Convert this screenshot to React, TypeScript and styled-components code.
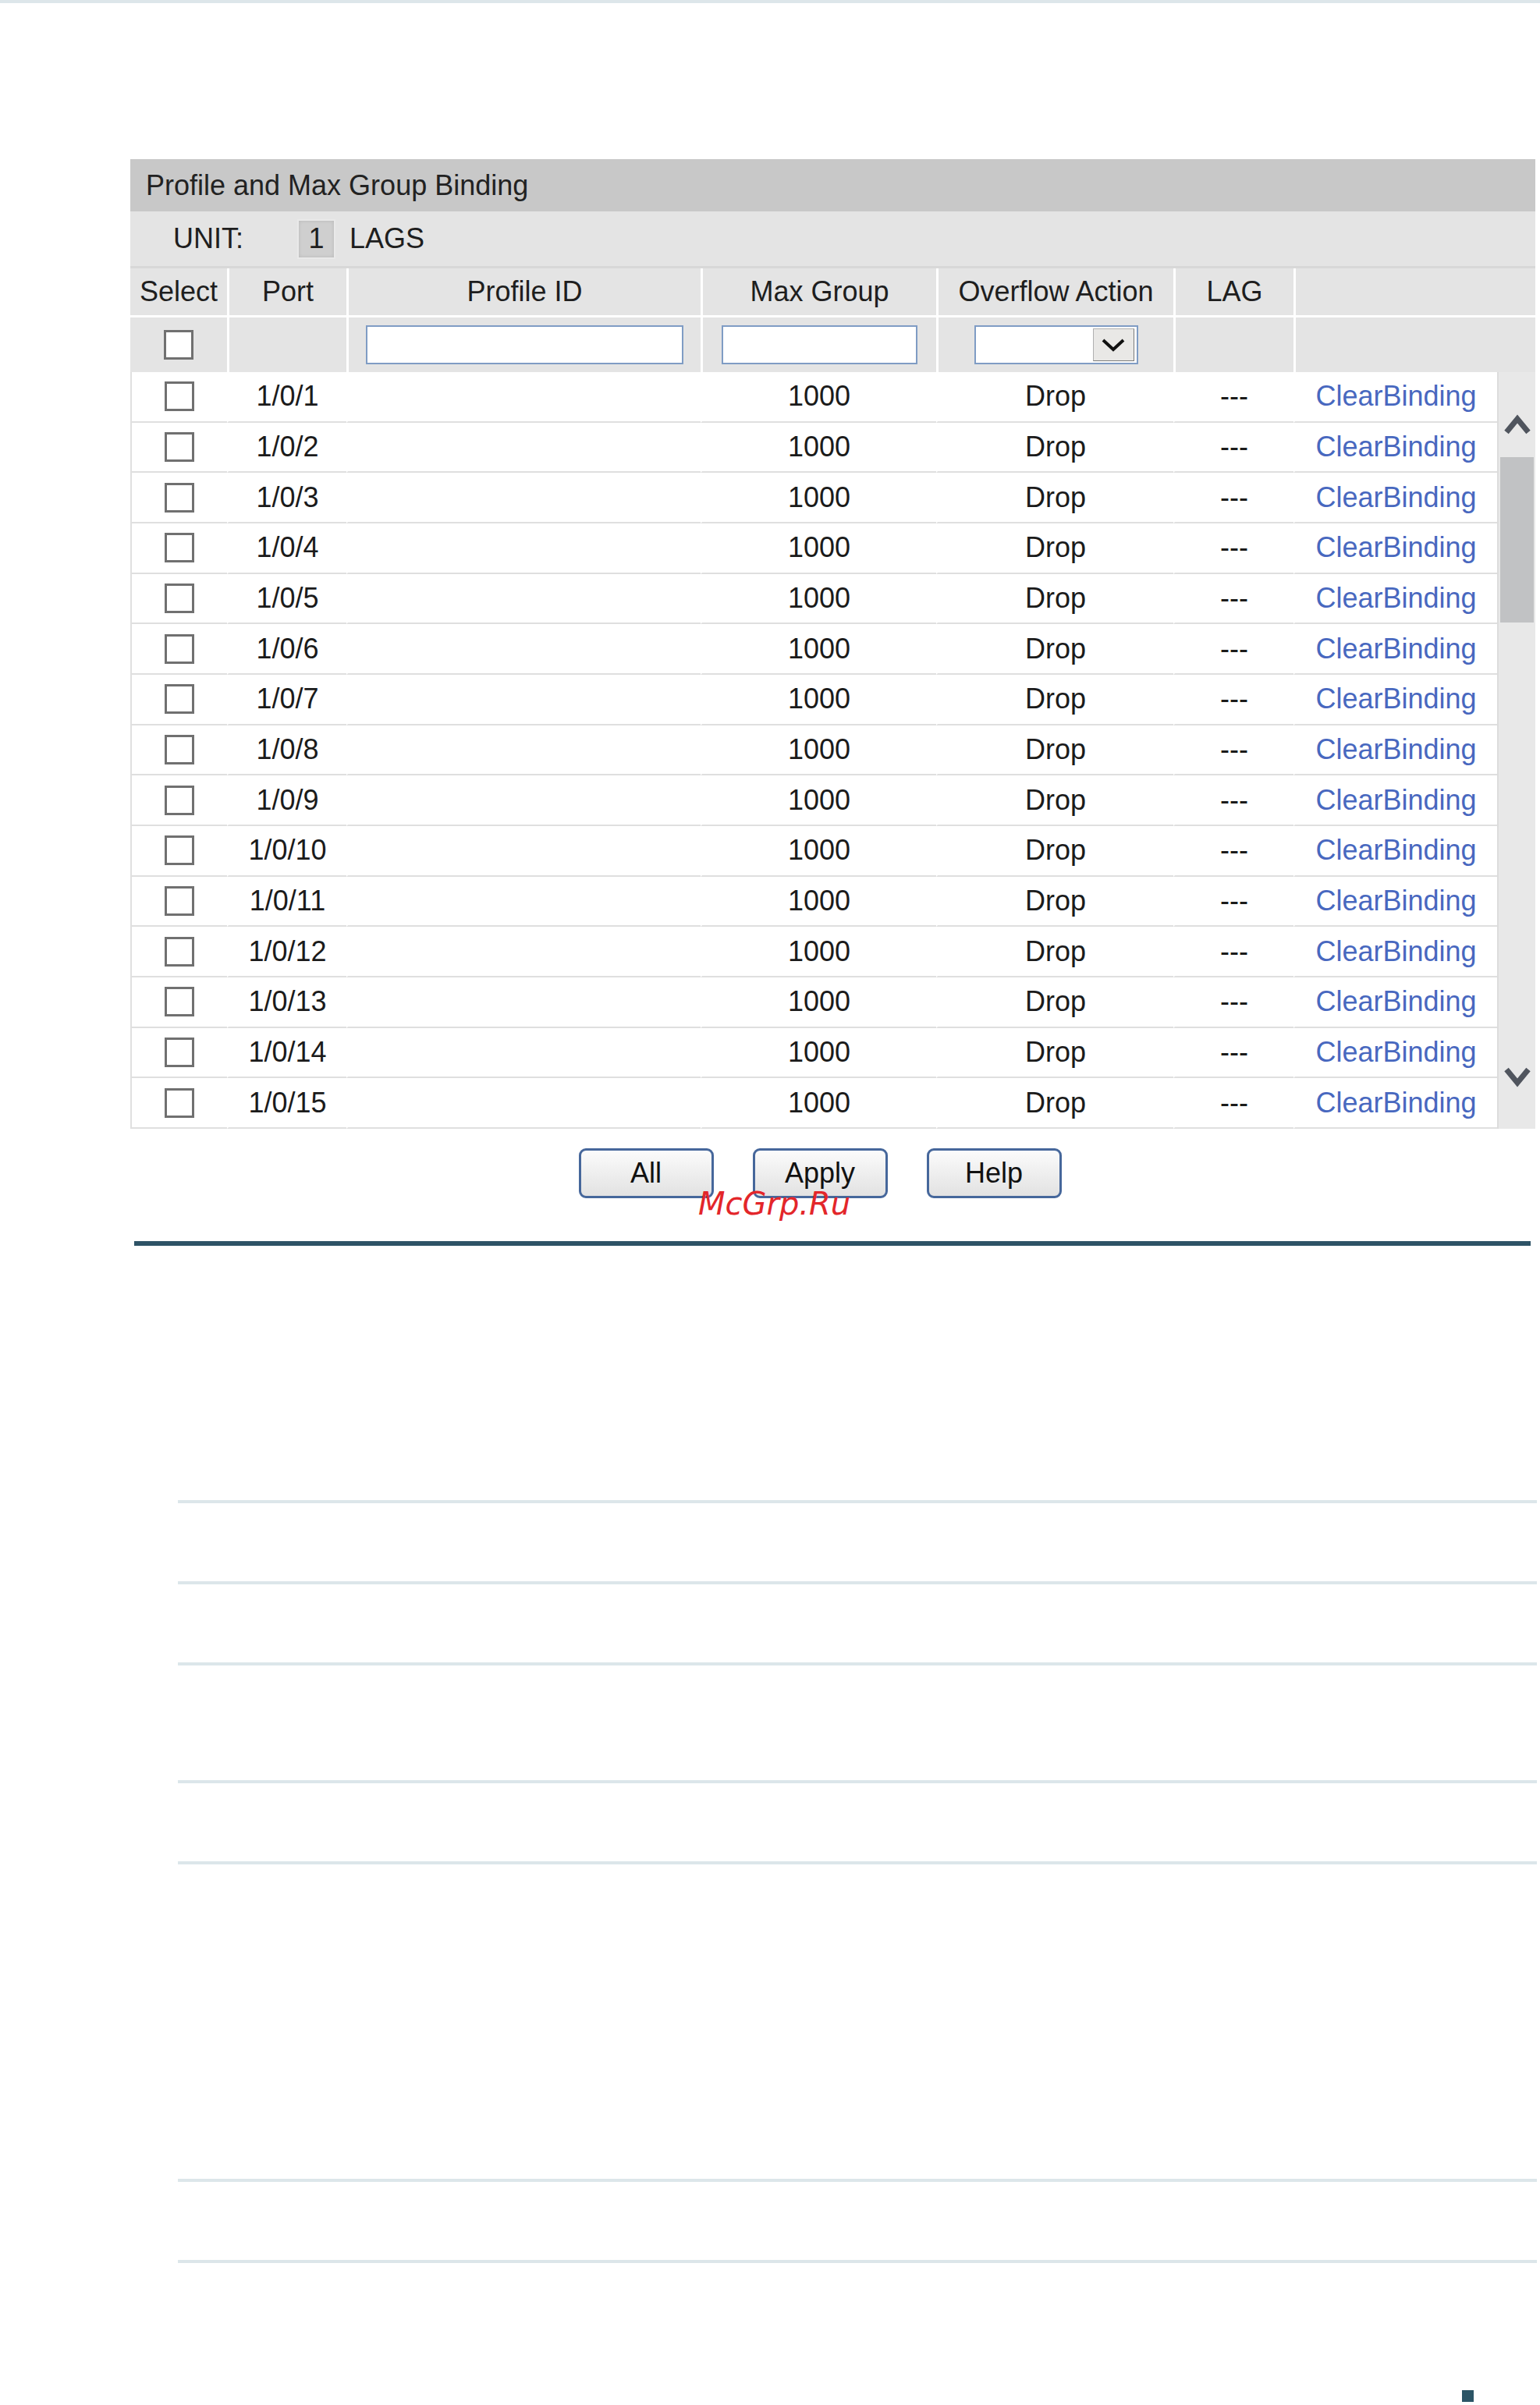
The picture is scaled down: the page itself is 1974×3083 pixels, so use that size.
import React from "react";
import styled, { createGlobalStyle } from "styled-components";

const GlobalStyle = createGlobalStyle`
  html, body {
    margin: 0;
    padding: 0;
    background: #fff;
  }
  body {
    font-family: "Liberation Sans", Arial, sans-serif;
    color: #1b1b1b;
  }
`;

// column widths, head rows span the scrollbar too
const HEAD_COLS = "124px 153px 454px 302px 304px 154px 310px";
const ROW_COLS = "122px 153px 454px 302px 304px 154px 261px";

const ports = Array.from({ length: 15 }, (_, i) => `1/0/${i + 1}`);

const Chevron = ({ dir }: { dir: "up" | "down" }) => (
  <svg width="34" height="28" viewBox="0 0 34 28">
    <polyline
      points={dir === "up" ? "3,24 17,7 31,24" : "3,4 17,21 31,4"}
      fill="none"
      stroke="#50555e"
      strokeWidth="7"
    />
  </svg>
);

const SmallChevron = () => (
  <svg width="30" height="17" viewBox="0 0 30 17">
    <polyline points="2,2 15,14 28,2" fill="none" stroke="#111" strokeWidth="4" />
  </svg>
);

const App: React.FC = () => {
  return (
    <Page>
      <GlobalStyle />
      <Panel>
        <TitleBar>Profile and Max Group Binding</TitleBar>
        <UnitBar>
          <UnitLabel>UNIT:</UnitLabel>
          <UnitBox>1</UnitBox>
          <span>LAGS</span>
        </UnitBar>

        <HeadRow $height={60}>
          <HeadCell>Select</HeadCell>
          <HeadCell>Port</HeadCell>
          <HeadCell>Profile ID</HeadCell>
          <HeadCell>Max Group</HeadCell>
          <HeadCell>Overflow Action</HeadCell>
          <HeadCell>LAG</HeadCell>
          <HeadCell />
        </HeadRow>
        <HeadRow $height={70} $last>
          <HeadCell>
            <Checkbox />
          </HeadCell>
          <HeadCell />
          <HeadCell>
            <TextInput type="text" $width={407} />
          </HeadCell>
          <HeadCell>
            <TextInput type="text" $width={251} />
          </HeadCell>
          <HeadCell>
            <SelectBox>
              <SelectArrow>
                <SmallChevron />
              </SelectArrow>
            </SelectBox>
          </HeadCell>
          <HeadCell />
          <HeadCell />
        </HeadRow>

        <Body>
          <Rows>
            {ports.map((p) => (
              <DataRow key={p}>
                <DataCell>
                  <Checkbox />
                </DataCell>
                <DataCell>{p}</DataCell>
                <DataCell />
                <DataCell>1000</DataCell>
                <DataCell>Drop</DataCell>
                <DataCell>---</DataCell>
                <DataCell>
                  <Link href="#">ClearBinding</Link>
                </DataCell>
              </DataRow>
            ))}
          </Rows>
          <Scrollbar>
            <Chevron dir="up" />
            <Thumb />
            <Spacer />
            <Chevron dir="down" />
          </Scrollbar>
        </Body>
      </Panel>

      <ButtonBar>
        <Button>All</Button>
        <Button>Apply</Button>
        <Button>Help</Button>
        <Watermark>McGrp.Ru</Watermark>
      </ButtonBar>

      <Rule />

      <DocLines>
        {[104, 104, 151, 104, 407, 104, 4].map((h, i) => (
          <DocRow key={i} $height={h} />
        ))}
      </DocLines>

      <PageMark />
    </Page>
  );
};

export default App;

const Page = styled.div`
  width: 1974px;
  height: 3083px;
  box-sizing: border-box;
  border-top: 4px solid #dde6ea;
  padding-top: 200px;
  overflow: hidden;
`;

const Panel = styled.div`
  margin-left: 167px;
  width: 1801px;
`;

const TitleBar = styled.div`
  height: 67px;
  background: #c8c8c8;
  display: flex;
  align-items: center;
  padding-left: 20px;
  font-size: 36px;
  color: #222;
`;

const UnitBar = styled.div`
  height: 70px;
  background: #e4e4e4;
  border-bottom: 3px solid #d8d8d8;
  display: flex;
  align-items: center;
  padding-left: 55px;
  font-size: 36px;
  color: #1e1e1e;
`;

const UnitLabel = styled.span`
  margin-right: 69px;
`;

const UnitBox = styled.div`
  width: 49px;
  height: 51px;
  box-sizing: border-box;
  border: 2px solid #e9e9e9;
  background: #cfcfcf;
  box-shadow: inset 0 0 4px rgba(0, 0, 0, 0.12);
  display: flex;
  align-items: center;
  justify-content: center;
  margin-right: 18px;
`;

const HeadRow = styled.div<{ $height: number; $last?: boolean }>`
  display: grid;
  grid-template-columns: ${HEAD_COLS};
  height: ${({ $height }) => $height}px;
  background: #e4e4e4;
  border-bottom: ${({ $last }) => ($last ? "0" : "3px solid #fff")};
`;

const HeadCell = styled.div`
  display: flex;
  align-items: center;
  justify-content: center;
  font-size: 36px;
  color: #1e1e1e;
  white-space: nowrap;
  & + & {
    border-left: 3px solid #fff;
  }
`;

const Checkbox = styled.div`
  width: 38px;
  height: 38px;
  box-sizing: border-box;
  border: 3px solid #707070;
  background: #fff;
`;

const TextInput = styled.input<{ $width: number }>`
  width: ${({ $width }) => $width}px;
  height: 50px;
  box-sizing: border-box;
  border: 2px solid #7f9cc4;
  background: #fff;
  padding: 0;
  outline: none;
`;

const SelectBox = styled.div`
  width: 210px;
  height: 50px;
  box-sizing: border-box;
  border: 2px solid #7f9cc4;
  background: #fff;
  display: flex;
  justify-content: flex-end;
  align-items: center;
  padding-right: 3px;
`;

const SelectArrow = styled.div`
  width: 53px;
  height: 42px;
  box-sizing: border-box;
  background: #e9e8e6;
  border: 1px solid #b0b0b0;
  border-right-color: #7a7a7a;
  border-bottom-color: #7a7a7a;
  display: flex;
  align-items: center;
  justify-content: center;
`;

const Body = styled.div`
  display: flex;
  height: 970px;
`;

const Rows = styled.div`
  width: 1752px;
  box-sizing: border-box;
  border-left: 2px solid #e0e0e0;
  display: flex;
  flex-direction: column;
`;

const DataRow = styled.div`
  display: grid;
  grid-template-columns: ${ROW_COLS};
  height: 64.667px;
  background: #fff;
`;

const DataCell = styled.div`
  display: flex;
  align-items: center;
  justify-content: center;
  font-size: 36px;
  color: #1b1b1b;
  border-bottom: 2px solid #dfdfdf;
  white-space: nowrap;
  & + & {
    border-left: 2px solid #fff;
  }
`;

const Link = styled.a`
  color: #4868bf;
  text-decoration: none;
`;

const Scrollbar = styled.div`
  width: 49px;
  box-sizing: border-box;
  background: #e8e8e8;
  border-left: 2px solid #dcdcdc;
  display: flex;
  flex-direction: column;
  align-items: center;
  padding: 53px 0 52px;
`;

const Thumb = styled.div`
  width: 43px;
  height: 212px;
  margin-top: 28px;
  background: #c1c2c4;
`;

const Spacer = styled.div`
  flex: 1;
`;

const ButtonBar = styled.div`
  position: relative;
  margin-left: 167px;
  margin-top: 25px;
  width: 1768px;
  display: flex;
  justify-content: center;
  gap: 50px;
`;

const Button = styled.button`
  width: 173px;
  height: 64px;
  box-sizing: border-box;
  border: 3px solid #46679b;
  border-radius: 9px;
  background: linear-gradient(#fbfbfb, #e2e2e2);
  font-family: "Liberation Sans", Arial, sans-serif;
  font-size: 36px;
  color: #111;
  padding: 0;
`;

const Watermark = styled.div`
  position: absolute;
  left: 728px;
  top: 51px;
  font-family: "DejaVu Sans", sans-serif;
  font-style: italic;
  font-size: 40px;
  line-height: 40px;
  color: #e3262a;
  pointer-events: none;
`;

const Rule = styled.div`
  margin-left: 172px;
  margin-top: 55px;
  width: 1790px;
  height: 6px;
  background: #2e5366;
`;

const DocLines = styled.div`
  margin-left: 228px;
  margin-top: 326px;
  width: 1742px;
`;

const DocRow = styled.div<{ $height: number }>`
  height: ${({ $height }) => $height}px;
  box-sizing: border-box;
  border-top: 4px solid #dce6ea;
`;

const PageMark = styled.div`
  margin-left: 1874px;
  margin-top: 163px;
  width: 15px;
  height: 15px;
  background: #2c5566;
`;
